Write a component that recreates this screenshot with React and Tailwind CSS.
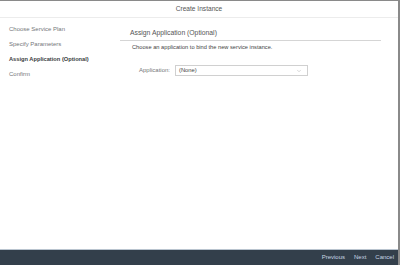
import React from 'react';
import { ChevronDown } from 'lucide-react';

const steps = [
  { label: 'Choose Service Plan' },
  { label: 'Specify Parameters' },
  { label: 'Assign Application (Optional)', active: true },
  { label: 'Confirm' },
];

export default function App() {
  return (
    <div
      className="w-[400px] h-[265px] flex flex-col bg-white border-t border-r-2 border-[#8a8a8a]"
      style={{ fontFamily: '"Liberation Sans", Arial, sans-serif' }}
    >
      {/* dialog header */}
      <div className="h-[17px] shrink-0 flex items-center justify-center border-b border-[#ececec] text-[6.6px] text-[#555]">
        Create Instance
      </div>

      <div className="flex-1 flex">
        {/* wizard steps */}
        <div className="w-[120px] shrink-0 pl-[9px] pt-[8px] flex flex-col gap-[8px]">
          {steps.map((s) => (
            <div
              key={s.label}
              className={
                s.active
                  ? 'text-[5.7px] leading-[7px] text-[#3a3d40] font-semibold'
                  : 'text-[6px] leading-[7px] text-[#74777a]'
              }
            >
              {s.label}
            </div>
          ))}
        </div>

        {/* step content */}
        <div className="flex-1 pt-[11px] pr-[17px]">
          <div className="pl-[10px] pb-[3px] border-b border-[#d5d5d5] text-[6.8px] leading-[8px] text-[#555]">
            Assign Application (Optional)
          </div>
          <div className="pl-[12px] pt-[3px] text-[5.7px] leading-[7px] text-[#444]">
            Choose an application to bind the new service instance.
          </div>
          <div className="flex items-center pt-[14px]">
            <div className="w-[50px] text-right text-[6px] text-[#74777a]">Application:</div>
            <div className="ml-[5px] w-[133px] h-[11px] border border-[#d0d0d0] flex items-center justify-between pl-[3px] pr-[5px]">
              <span className="text-[5.8px] text-[#444]">(None)</span>
              <ChevronDown className="w-[6px] h-[6px] text-[#9a9a9a]" strokeWidth={1.5} />
            </div>
          </div>
        </div>
      </div>

      {/* footer toolbar */}
      <div className="h-[16px] shrink-0 bg-[#333f4b] border-t border-[#b9c4cf] flex items-center justify-end gap-[9px] pr-[4px] text-[6px] text-[#c9d6e3]">
        <span>Previous</span>
        <span>Next</span>
        <span>Cancel</span>
      </div>
    </div>
  );
}
